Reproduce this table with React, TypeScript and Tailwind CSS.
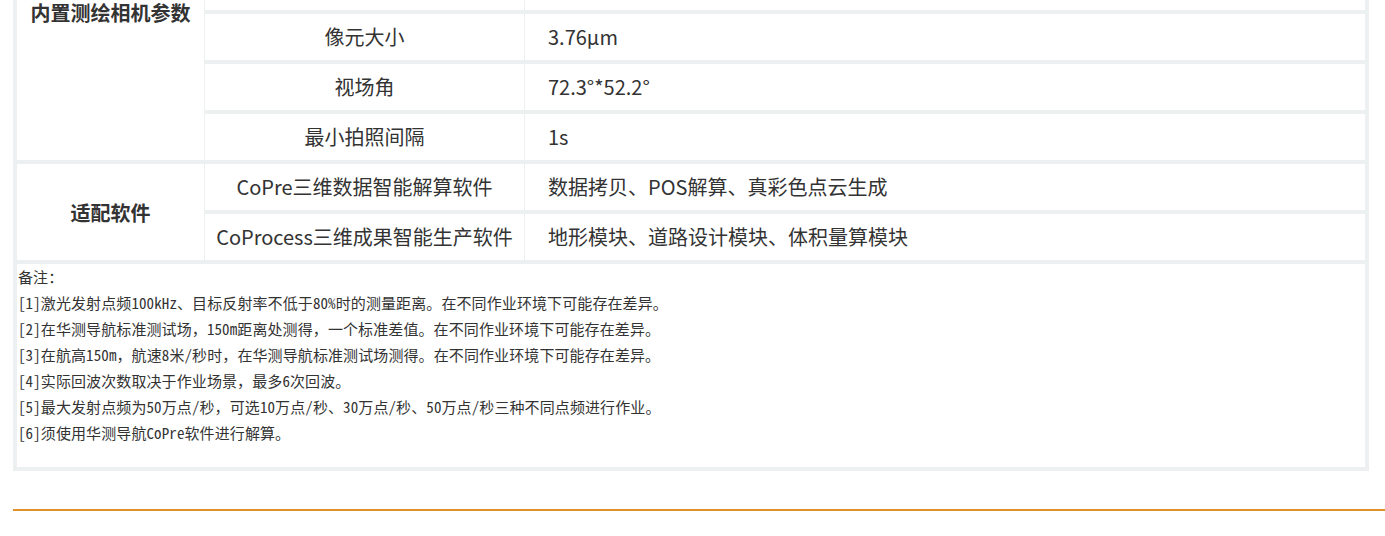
import React from 'react';

type Row = { name: string; value: string };

// the first three rows of this group sit above the visible area
const cameraRows: Row[] = [
    { name: '', value: '' },
    { name: ' ', value: '' },
    { name: '  ', value: '' },
    { name: '像元大小', value: '3.76μm' },
    { name: '视场角', value: '72.3°*52.2°' },
    { name: '最小拍照间隔', value: '1s' },
];

const softwareRows: Row[] = [
    { name: 'CoPre三维数据智能解算软件', value: '数据拷贝、POS解算、真彩色点云生成' },
    { name: 'CoProcess三维成果智能生产软件', value: '地形模块、道路设计模块、体积量算模块' },
];

const notes = [
    '备注：',
    '[1]激光发射点频100kHz、目标反射率不低于80%时的测量距离。在不同作业环境下可能存在差异。',
    '[2]在华测导航标准测试场，150m距离处测得，一个标准差值。在不同作业环境下可能存在差异。',
    '[3]在航高150m，航速8米/秒时，在华测导航标准测试场测得。在不同作业环境下可能存在差异。',
    '[4]实际回波次数取决于作业场景，最多6次回波。',
    '[5]最大发射点频为50万点/秒，可选10万点/秒、30万点/秒、50万点/秒三种不同点频进行作业。',
    '[6]须使用华测导航CoPre软件进行解算。',
];

const Group: React.FC<{ title: string; rows: Row[]; span: string }> = ({ title, rows, span }) => (
    <>
        <div className={`${span} bg-white flex items-center justify-center font-bold text-[20px] leading-[20px] pt-[2px] text-[#333]`}>{title}</div>
        {rows.map((r) => (
            <React.Fragment key={r.name}>
                <div className="h-[46px] bg-white flex items-center justify-center text-[20px] text-[#333] whitespace-nowrap">{r.name}</div>
                <div className="h-[46px] bg-white flex items-center pl-[23px] text-[20px] text-[#333] whitespace-nowrap">{r.value}</div>
            </React.Fragment>
        ))}
    </>
);

export default function App() {
    return (
        <div className="h-[536px] overflow-hidden bg-white font-['Noto_Sans_CJK_SC','Noto_Sans',sans-serif]">
            <div className="-mt-[140px] ml-[13px] w-[1356px] bg-[#edf0f1] p-[4px] grid grid-cols-[187px_319px_1fr] gap-x-px gap-y-[4px]">
                <Group title="内置测绘相机参数" rows={cameraRows} span="row-span-6" />
                <Group title="适配软件" rows={softwareRows} span="row-span-2" />
                <div className="col-span-3 bg-white pl-px pb-[21px] text-[15px] tracking-[0.1px] leading-[26px] text-[#333] font-['Noto_Sans_Mono_CJK_SC','Liberation_Mono','Noto_Sans_CJK_SC',monospace]">
                    {notes.map((n) => (
                        <p key={n} className="whitespace-nowrap">{n}</p>
                    ))}
                </div>
            </div>
            <div className="mt-[38px] ml-[13px] h-[2px] bg-[#e0922a]" />
        </div>
    );
}
